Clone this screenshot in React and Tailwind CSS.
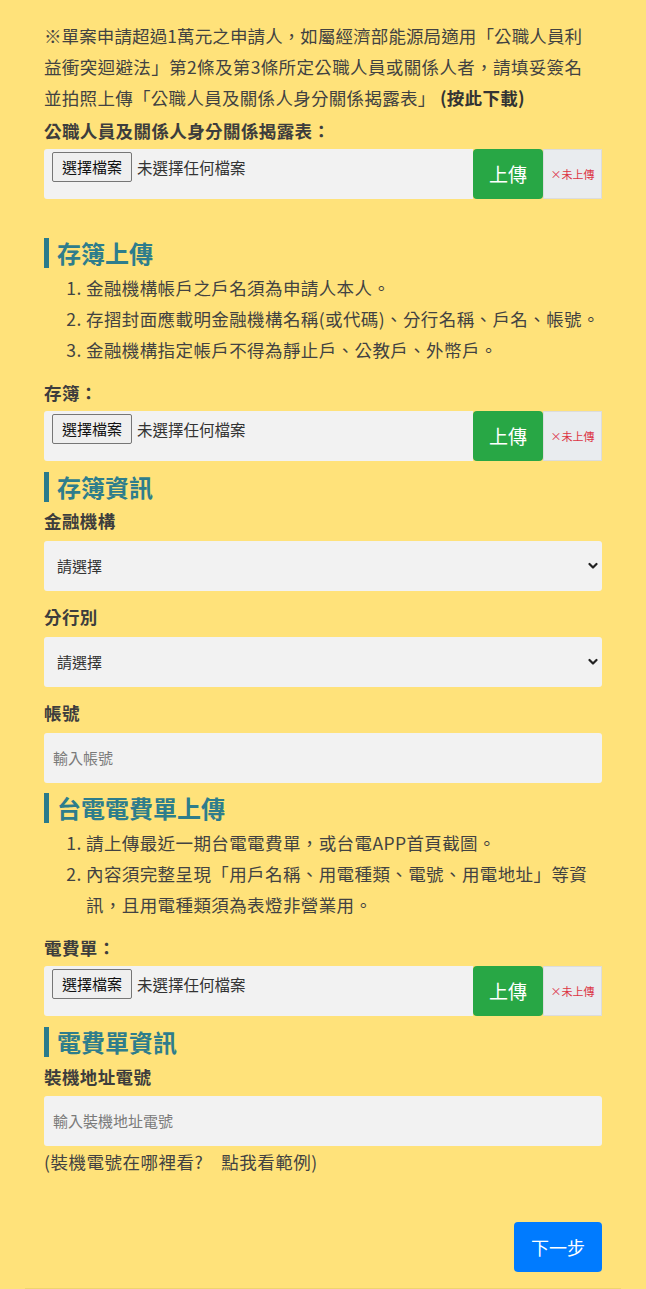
import React from "react";

function UploadRow({ className = "" }) {
  return (
    <div className={"flex h-[50px] " + className}>
      <div className="flex-1 bg-[#f2f2f2] pl-[8px] pt-[3px] flex items-start rounded-l-[3px]">
        <span className="h-[30px] px-[9px] border border-[#767676] rounded-[2px] bg-[#efefef] text-[15px] leading-[28px] text-[#111]">
          選擇檔案
        </span>
        <span className="ml-[5px] leading-[30px] text-[15.5px] text-[#333]">未選擇任何檔案</span>
      </div>
      <button className="w-[70px] bg-[#28a745] text-white text-[19px] rounded-[4px]">上傳</button>
      <div className="w-[59px] bg-[#e9ecef] border border-[#dcdcdc] text-[#dc3545] text-[11px] flex items-center justify-center">
        ×未上傳
      </div>
    </div>
  );
}

function Heading({ children, className = "" }) {
  return (
    <div className={"flex items-center h-[30px] " + className}>
      <span className="w-[5px] h-[30px] bg-[#2a7b8b]" />
      <h2 className="ml-[8px] text-[24px] font-bold text-[#2e7d8c] leading-[30px]">{children}</h2>
    </div>
  );
}

function Label({ children, className = "" }) {
  return (
    <div className={"text-[17.5px] leading-[31px] font-bold tracking-[0.4px] text-[#3d3d3d] " + className}>{children}</div>
  );
}

function Select({ className = "" }) {
  return (
    <div className={"relative h-[50px] bg-[#f2f2f2] rounded-[3px] flex items-center " + className}>
      <span className="pl-[13px] text-[15px] text-[#333]">請選擇</span>
      <svg className="absolute right-[4px] top-[21px]" width="10" height="8" viewBox="0 0 10 8">
        <path d="M1.5 2 L5 5.5 L8.5 2" fill="none" stroke="#222" strokeWidth="2.2" strokeLinecap="round" strokeLinejoin="round" />
      </svg>
    </div>
  );
}

function Input({ placeholder, className = "" }) {
  return (
    <div className={"h-[50px] bg-[#f2f2f2] rounded-[3px] flex items-center " + className}>
      <span className="pl-[9px] text-[15px] text-[#7a7a7a]">{placeholder}</span>
    </div>
  );
}

export default function App() {
  return (
    <div className="min-h-[1289px] bg-[#ffe27a] font-['Noto_Sans_CJK_TC',sans-serif] text-[#424242]">
      <div className="px-[25px]">
        <div className="px-[19px] pt-[20px] pb-[16px] border-b border-[#f0d46e]">
          <div className="w-[538px] text-[17.5px] leading-[31px]">
            <div className="text-justify [text-align-last:justify]">※單案申請超過1萬元之申請人，如屬經濟部能源局適用「公職人員利</div>
            <div className="text-justify [text-align-last:justify]">益衝突迴避法」第2條及第3條所定公職人員或關係人者，請填妥簽名</div>
            <div className="tracking-[0.3px]">
              並拍照上傳「公職人員及關係人身分關係揭露表」<span className="font-bold text-[#333]"> (按此下載)</span>
            </div>
          </div>
          <Label className="mt-[2px]">公職人員及關係人身分關係揭露表：</Label>
          <UploadRow className="mt-[3px]" />

          <Heading className="mt-[39px]">存簿上傳</Heading>
          <ol className="list-decimal pl-[42px] mt-[4px] text-[17.5px] leading-[31px] tracking-[0.4px]">
            <li>金融機構帳戶之戶名須為申請人本人。</li>
            <li>存摺封面應載明金融機構名稱(或代碼)、分行名稱、戶名、帳號。</li>
            <li>金融機構指定帳戶不得為靜止戶、公教戶、外幣戶。</li>
          </ol>
          <Label className="mt-[12px]">存簿：</Label>
          <UploadRow className="mt-[3px]" />

          <Heading className="mt-[11px]">存簿資訊</Heading>
          <Label className="mt-[3px]">金融機構</Label>
          <Select className="mt-[5px]" />
          <Label className="mt-[10px]">分行別</Label>
          <Select className="mt-[5px]" />
          <Label className="mt-[10px]">帳號</Label>
          <Input className="mt-[5px]" placeholder="輸入帳號" />

          <Heading className="mt-[10px]">台電電費單上傳</Heading>
          <ol className="list-decimal pl-[42px] mt-[4px] text-[17.5px] leading-[31px] tracking-[0.4px]">
            <li>請上傳最近一期台電電費單，或台電APP首頁截圖。</li>
            <li>內容須完整呈現「用戶名稱、用電種類、電號、用電地址」等資訊，且用電種類須為表燈非營業用。</li>
          </ol>
          <Label className="mt-[12px]">電費單：</Label>
          <UploadRow className="mt-[3px]" />

          <Heading className="mt-[11px]">電費單資訊</Heading>
          <Label className="mt-[4px]">裝機地址電號</Label>
          <Input className="mt-[4px]" placeholder="輸入裝機地址電號" />
          <div className="text-[17.5px] leading-[31px] tracking-[0.5px]">(裝機電號在哪裡看?　點我看範例)</div>

          <div className="flex justify-end mt-[45px]">
            <button className="w-[88px] h-[50px] bg-[#007bff] text-white text-[18px] rounded-[4px]">下一步</button>
          </div>
        </div>
      </div>
    </div>
  );
}
